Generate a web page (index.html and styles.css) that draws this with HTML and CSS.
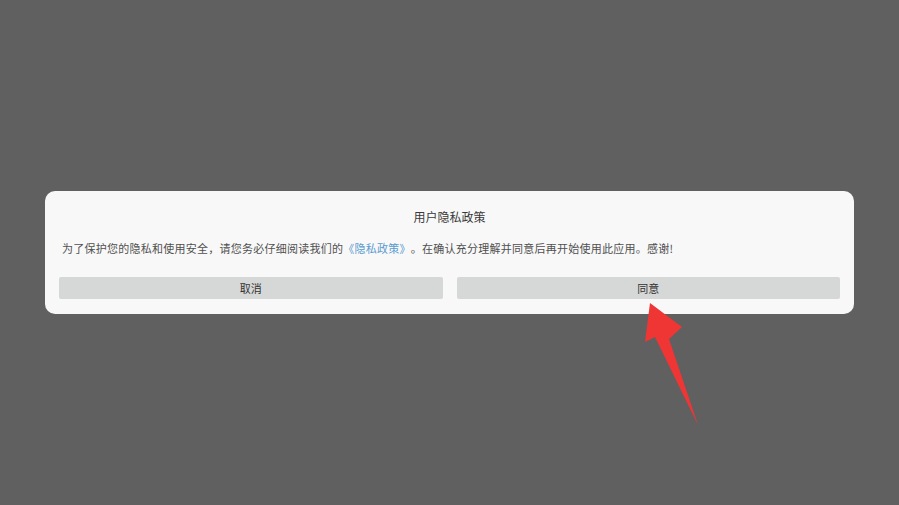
FILE: index.html
```html
<!DOCTYPE html>
<html lang="zh-CN">
<head>
<meta charset="UTF-8" />
<meta name="viewport" content="width=device-width, initial-scale=1.0" />
<title>用户隐私政策</title>
<link rel="stylesheet" href="styles.css">
</head>
<body>
<div class="dialog">
  <h3 class="title">用户隐私政策</h3>
  <p class="text">为了保护您的隐私和使用安全，请您务必仔细阅读我们的<a class="link" href="#">《隐私政策》</a>。在确认充分理解并同意后再开始使用此应用。感谢!</p>
  <div class="actions">
    <button class="btn">取消</button>
    <button class="btn">同意</button>
  </div>
</div>
<svg class="arrow" width="899" height="505" viewBox="0 0 899 505">
  <polygon points="650,303 682,327 669,339 698,425 655,337 645,342" fill="#f03535"/>
</svg>
</body>
</html>
```

FILE: styles.css
```css
* {
box-sizing: border-box;
}
body {
background-color: #606060;
margin: 0;
height: 100vh;
display: flex;
align-items: center;
justify-content: center;
font-family: "Noto Sans CJK SC", "Noto Sans", sans-serif;
color: #333;
}
.dialog {
width: 809px;
background-color: #f8f8f8;
border-radius: 10px;
padding: 18px 14px 15px;
margin-top: -1px;
}
.title {
margin: 0;
font-size: 12px;
font-weight: normal;
line-height: 16px;
text-align: center;
color: #3a3a3a;
}
.text {
margin: 15px 3px 0;
font-size: 11px;
line-height: 16px;
letter-spacing: 0.25px;
color: #505050;
text-spacing-trim: space-all;
}
.link {
color: #5a9bd0;
text-decoration: none;
}
.actions {
display: flex;
gap: 14px;
margin-top: 21px;
}
.btn {
flex: 1;
height: 22px;
border: 0;
border-radius: 2px;
background-color: #d6d7d7;
font-family: inherit;
font-size: 11px;
color: #333;
padding: 0;
}
.arrow {
position: absolute;
left: 0;
top: 0;
pointer-events: none;
}
```
